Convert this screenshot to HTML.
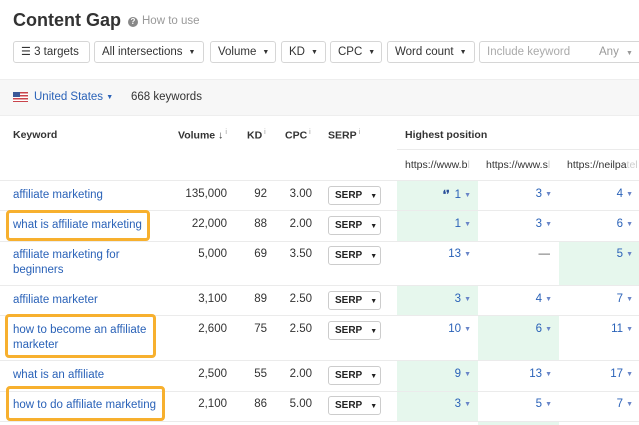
<!DOCTYPE html>
<html><head><style>
*{margin:0;padding:0;box-sizing:border-box}
body{width:639px;height:425px;overflow:hidden;background:#fff;font-family:"Liberation Sans",Arial,sans-serif;color:#333;position:relative;font-size:11.5px}
.a{position:absolute;white-space:nowrap}
.btn{position:absolute;top:41px;height:22px;border:1px solid #d6d6d6;border-radius:3px;background:#fff;font-size:11.5px;line-height:20px;padding:0 7px;color:#333;white-space:nowrap;overflow:hidden}
.tri{font-size:7px;vertical-align:1px;margin-left:6px}
.hl{position:absolute;height:1px;background:#ebebeb;left:0;width:639px}
.g{position:absolute;background:#e6f7ed}
.kw{position:absolute;left:13px;color:#2a62b8;font-size:11.5px;line-height:15px;white-space:nowrap}
.n{position:absolute;text-align:right;font-size:11.5px;color:#333}
.p{position:absolute;text-align:right;font-size:11.5px;color:#2a62b8}
.p i{font-style:normal;font-size:7px;color:#6a86c8;margin-left:3px;vertical-align:1px}
.serp{position:absolute;left:328px;width:53px;height:19px;border:1px solid #ccc;border-radius:3px;font-size:10px;font-weight:bold;line-height:17px;padding-left:6px;color:#222;white-space:nowrap}
.serp span{font-size:7px;margin-left:8px}
.ob{position:absolute;border:3px solid #f7b02e;border-radius:4px}
.h{position:absolute;font-weight:bold;font-size:10.5px;color:#333;white-space:nowrap}
.h sup{font-weight:normal;font-size:7px;color:#999;margin-left:2px}
</style></head><body>
<div class="a" style="left:13px;top:10px;font-size:18px;font-weight:bold;color:#333">Content Gap</div>
<div class="a" style="left:128px;top:17px;width:10px;height:10px;border-radius:50%;background:#888;color:#fff;font-size:8px;text-align:center;line-height:10px;font-weight:bold">?</div>
<div class="a" style="left:142px;top:15px;font-size:11.5px;color:#999">How to use</div>

<div class="btn" style="left:13px;width:77px"><span style="font-size:11px">☰</span> 3 targets</div>
<div class="btn" style="left:94px;width:110px">All intersections<span class="tri">▼</span></div>
<div class="btn" style="left:210px;width:66px">Volume<span class="tri">▼</span></div>
<div class="btn" style="left:281px;width:45px">KD<span class="tri">▼</span></div>
<div class="btn" style="left:330px;width:52px">CPC<span class="tri">▼</span></div>
<div class="btn" style="left:387px;width:88px">Word count<span class="tri">▼</span></div>
<div class="btn" style="left:479px;width:170px;color:#aaa">Include keyword<span style="position:absolute;left:119px;color:#999">Any <span style="font-size:7px;margin-left:4px">▼</span></span></div>

<div class="a" style="left:0;top:79px;width:639px;height:37px;background:#f7f7f7;border-top:1px solid #eee;border-bottom:1px solid #eee"></div>
<div class="a" style="left:13px;top:92px;width:15px;height:10px;background:repeating-linear-gradient(#c9444b 0 1.5px,#fff 1.5px 3px)"><div style="width:7px;height:5px;background:#3b5998"></div></div>
<div class="a" style="left:34px;top:91px;font-size:11.5px;color:#2a62b8">United States <span style="font-size:7px;vertical-align:1px">▼</span></div>
<div class="a" style="left:131px;top:91px;font-size:11.5px;color:#333">668 keywords</div>

<div class="g" style="left:397px;top:180px;width:81px;height:30px"></div>
<div class="g" style="left:397px;top:210px;width:81px;height:31px"></div>
<div class="g" style="left:559px;top:241px;width:80px;height:44px"></div>
<div class="g" style="left:397px;top:285px;width:81px;height:30px"></div>
<div class="g" style="left:478px;top:315px;width:81px;height:45px"></div>
<div class="g" style="left:397px;top:360px;width:81px;height:31px"></div>
<div class="g" style="left:397px;top:391px;width:81px;height:30px"></div>
<div class="g" style="left:478px;top:421px;width:81px;height:4px"></div>

<div class="h" style="left:13px;top:129px">Keyword</div>
<div class="h" style="left:178px;top:129px">Volume ↓<sup>i</sup></div>
<div class="h" style="left:247px;top:129px">KD<sup>i</sup></div>
<div class="h" style="left:285px;top:129px">CPC<sup>i</sup></div>
<div class="h" style="left:328px;top:129px">SERP<sup>i</sup></div>
<div class="h" style="left:405px;top:129px">Highest position</div>
<div class="a" style="left:397px;top:149px;width:242px;height:1px;background:#ebebeb"></div>
<div class="h" style="left:405px;top:159px;width:73px;overflow:hidden;font-weight:normal;color:#333">https://www.b<span style="color:#ccc">l</span></div>
<div class="h" style="left:486px;top:159px;width:73px;overflow:hidden;font-weight:normal;color:#333">https://www.s<span style="color:#ccc">l</span></div>
<div class="h" style="left:567px;top:159px;width:72px;overflow:hidden;font-weight:normal;color:#333">https://neilpa<span style="color:#ccc">tel</span></div>

<div class="hl" style="top:180px"></div>
<div class="hl" style="top:210px"></div>
<div class="hl" style="top:241px"></div>
<div class="hl" style="top:285px"></div>
<div class="hl" style="top:315px"></div>
<div class="hl" style="top:360px"></div>
<div class="hl" style="top:391px"></div>
<div class="hl" style="top:421px"></div>

<div class="kw" style="top:188px">affiliate marketing</div>
<div class="kw" style="top:218px">what is affiliate marketing</div>
<div class="kw" style="top:248px">affiliate marketing for<br>beginners</div>
<div class="kw" style="top:293px">affiliate marketer</div>
<div class="kw" style="top:323px">how to become an affiliate<br>marketer</div>
<div class="kw" style="top:368px">what is an affiliate</div>
<div class="kw" style="top:398px">how to do affiliate marketing</div>

<div class="ob" style="left:6px;top:210px;width:144px;height:31px"></div>
<div class="ob" style="left:5px;top:314px;width:151px;height:44px"></div>
<div class="ob" style="left:6px;top:386px;width:159px;height:35px"></div>

<div class="n" style="left:160px;width:67px;top:188px">135,000</div><div class="n" style="left:240px;width:27px;top:188px">92</div><div class="n" style="left:280px;width:32px;top:188px">3.00</div>
<div class="n" style="left:160px;width:67px;top:218px">22,000</div><div class="n" style="left:240px;width:27px;top:218px">88</div><div class="n" style="left:280px;width:32px;top:218px">2.00</div>
<div class="n" style="left:160px;width:67px;top:248px">5,000</div><div class="n" style="left:240px;width:27px;top:248px">69</div><div class="n" style="left:280px;width:32px;top:248px">3.50</div>
<div class="n" style="left:160px;width:67px;top:293px">3,100</div><div class="n" style="left:240px;width:27px;top:293px">89</div><div class="n" style="left:280px;width:32px;top:293px">2.50</div>
<div class="n" style="left:160px;width:67px;top:323px">2,600</div><div class="n" style="left:240px;width:27px;top:323px">75</div><div class="n" style="left:280px;width:32px;top:323px">2.50</div>
<div class="n" style="left:160px;width:67px;top:368px">2,500</div><div class="n" style="left:240px;width:27px;top:368px">55</div><div class="n" style="left:280px;width:32px;top:368px">2.00</div>
<div class="n" style="left:160px;width:67px;top:398px">2,100</div><div class="n" style="left:240px;width:27px;top:398px">86</div><div class="n" style="left:280px;width:32px;top:398px">5.00</div>

<div class="serp" style="top:186px">SERP<span>▼</span></div>
<div class="serp" style="top:216px">SERP<span>▼</span></div>
<div class="serp" style="top:246px">SERP<span>▼</span></div>
<div class="serp" style="top:291px">SERP<span>▼</span></div>
<div class="serp" style="top:321px">SERP<span>▼</span></div>
<div class="serp" style="top:366px">SERP<span>▼</span></div>
<div class="serp" style="top:396px">SERP<span>▼</span></div>

<div class="p" style="left:400px;width:71px;top:188px"><span style="font-size:11px;font-weight:bold;color:#2a4f9a;margin-right:5px">❛❜</span>1<i>▼</i></div>
<div class="p" style="left:480px;width:72px;top:188px">3<i>▼</i></div>
<div class="p" style="left:560px;width:73px;top:188px">4<i>▼</i></div>
<div class="p" style="left:400px;width:71px;top:218px">1<i>▼</i></div>
<div class="p" style="left:480px;width:72px;top:218px">3<i>▼</i></div>
<div class="p" style="left:560px;width:73px;top:218px">6<i>▼</i></div>
<div class="p" style="left:400px;width:71px;top:248px">13<i>▼</i></div>
<div class="n" style="left:480px;width:70px;top:248px;color:#555">—</div>
<div class="p" style="left:560px;width:73px;top:248px">5<i>▼</i></div>
<div class="p" style="left:400px;width:71px;top:293px">3<i>▼</i></div>
<div class="p" style="left:480px;width:72px;top:293px">4<i>▼</i></div>
<div class="p" style="left:560px;width:73px;top:293px">7<i>▼</i></div>
<div class="p" style="left:400px;width:71px;top:323px">10<i>▼</i></div>
<div class="p" style="left:480px;width:72px;top:323px">6<i>▼</i></div>
<div class="p" style="left:560px;width:73px;top:323px">11<i>▼</i></div>
<div class="p" style="left:400px;width:71px;top:368px">9<i>▼</i></div>
<div class="p" style="left:480px;width:72px;top:368px">13<i>▼</i></div>
<div class="p" style="left:560px;width:73px;top:368px">17<i>▼</i></div>
<div class="p" style="left:400px;width:71px;top:398px">3<i>▼</i></div>
<div class="p" style="left:480px;width:72px;top:398px">5<i>▼</i></div>
<div class="p" style="left:560px;width:73px;top:398px">7<i>▼</i></div>
</body></html>
